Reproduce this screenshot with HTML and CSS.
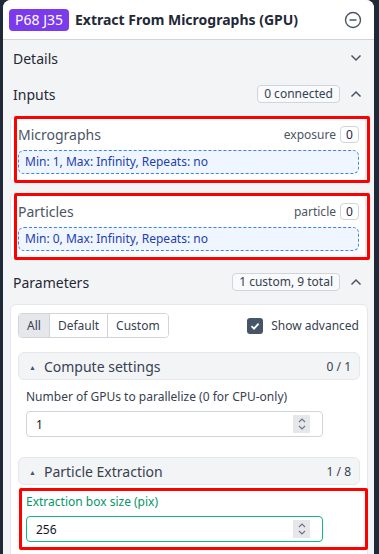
FILE: index.html
```html
<!doctype html>
<html lang="en">

<head>
  <meta charset="UTF-8" />
  <title>Extract From Micrographs (GPU)</title>
  <link rel="stylesheet" href="styles.css">
</head>

<body>
  <div class="panel">
    <div class="header">
      <span class="job-badge">P68 J35</span>
      <h1 class="title">Extract From Micrographs (GPU)</h1>
      <svg class="header-icon" width="18" height="18" viewBox="0 0 18 18">
        <circle cx="9" cy="9" r="7.5" fill="none" stroke="#4b5563" stroke-width="1.4" />
        <line x1="5.5" y1="9" x2="12.5" y2="9" stroke="#4b5563" stroke-width="1.4" />
      </svg>
    </div>

    <div class="section-row">
      <span class="section-title">Details</span>
      <div class="section-meta">
        <svg class="chevron" width="12" height="8" viewBox="0 0 12 8">
          <path d="M1.5 1.5 L6 6 L10.5 1.5" fill="none" stroke="#4b5563" stroke-width="1.5" />
        </svg>
      </div>
    </div>

    <div class="section-row">
      <span class="section-title">Inputs</span>
      <div class="section-meta">
        <span class="pill">0 connected</span>
        <svg class="chevron" width="12" height="8" viewBox="0 0 12 8">
          <path d="M1.5 6.5 L6 2 L10.5 6.5" fill="none" stroke="#4b5563" stroke-width="1.5" />
        </svg>
      </div>
    </div>

    <div class="inputs">
      <div class="input-card marked">
        <div class="input-head">
          <span class="input-name">Micrographs</span>
          <span class="input-type">exposure <span class="count">0</span></span>
        </div>
        <div class="input-rule">Min: 1, Max: Infinity, Repeats: no</div>
      </div>

      <div class="input-card marked">
        <div class="input-head">
          <span class="input-name">Particles</span>
          <span class="input-type">particle <span class="count">0</span></span>
        </div>
        <div class="input-rule">Min: 0, Max: Infinity, Repeats: no</div>
      </div>
    </div>

    <div class="section-row params-row">
      <span class="section-title">Parameters</span>
      <div class="section-meta">
        <span class="pill">1 custom, 9 total</span>
        <svg class="chevron" width="12" height="8" viewBox="0 0 12 8">
          <path d="M1.5 6.5 L6 2 L10.5 6.5" fill="none" stroke="#4b5563" stroke-width="1.5" />
        </svg>
      </div>
    </div>

    <div class="params-card">
      <div class="toolbar">
        <div class="segmented">
          <button class="seg active">All</button>
          <button class="seg">Default</button>
          <button class="seg">Custom</button>
        </div>
        <label class="advanced">
          <span class="checkbox">
            <svg width="12" height="12" viewBox="0 0 12 12">
              <path d="M2.5 6.2 L5 8.6 L9.6 3.6" fill="none" stroke="white" stroke-width="1.8" />
            </svg>
          </span>
          Show advanced
        </label>
      </div>

      <div class="group-head">
        <span class="group-name"><span class="caret">&#9650;</span>Compute settings</span>
        <span class="group-count">0 / 1</span>
      </div>
      <div class="field">
        <label class="field-label">Number of GPUs to parallelize (0 for CPU-only)</label>
        <div class="num-input">
          <span>1</span>
          <span class="spinner">
            <svg width="10" height="14" viewBox="0 0 10 14">
              <path d="M2 5 L5 2 L8 5 M2 9 L5 12 L8 9" fill="none" stroke="#6b7280" stroke-width="1.1" />
            </svg>
          </span>
        </div>
      </div>

      <div class="group-head">
        <span class="group-name"><span class="caret">&#9650;</span>Particle Extraction</span>
        <span class="group-count">1 / 8</span>
      </div>
      <div class="field custom marked-field">
        <label class="field-label">Extraction box size (pix)</label>
        <div class="num-input">
          <span>256</span>
          <span class="spinner">
            <svg width="10" height="14" viewBox="0 0 10 14">
              <path d="M2 5 L5 2 L8 5 M2 9 L5 12 L8 9" fill="none" stroke="#6b7280" stroke-width="1.1" />
            </svg>
          </span>
        </div>
      </div>
    </div>
  </div>
</body>

</html>
```

FILE: styles.css
```css
* {
  margin: 0;
  padding: 0;
  box-sizing: border-box;
}

html,
body {
  width: 100%;
  height: 100%;
}

body {
  background-color: #1f2937;
  font-family: 'Noto Sans', sans-serif;
  color: #1f2937;
  overflow: hidden;
}

.panel {
  width: 371px;
  height: 100%;
  margin-left: 3px;
  background-color: #f3f4f6;
  border-radius: 8px 8px 0 0;
  overflow: hidden;
}

.header {
  display: flex;
  align-items: center;
  height: 40px;
  padding: 0 12px 0 6px;
  background-color: white;
  border-bottom: 1px solid #d1d5db;
}

.job-badge {
  background-color: #7c3aed;
  color: white;
  font-size: 14px;
  line-height: 22px;
  padding: 0 6px;
  border-radius: 4px;
}

.title {
  font-size: 14px;
  font-weight: 700;
  color: #1f2937;
  margin-left: 6px;
  flex: 1;
}

.header-icon {
  display: block;
}

.section-row {
  display: flex;
  align-items: center;
  justify-content: space-between;
  height: 36px;
  padding: 0 10px;
}

.section-title {
  font-size: 14px;
  color: #1f2937;
}

.section-meta {
  display: flex;
  align-items: center;
  gap: 10px;
}

.chevron {
  display: block;
  margin-right: 2px;
}

.pill {
  font-size: 12px;
  line-height: 16px;
  color: #374151;
  border: 1px solid #d1d5db;
  border-radius: 4px;
  padding: 0 6px;
  background-color: #f9fafb;
}

.inputs {
  display: flex;
  flex-direction: column;
  gap: 10px;
  padding: 4px 8px 0 7px;
}

.input-card {
  position: relative;
  background-color: white;
  border: 1px solid #e5e7eb;
  border-radius: 6px;
  padding: 7px 6px 8px 7px;
}

.marked::after {
  content: "";
  position: absolute;
  top: -1px;
  left: 3px;
  right: -5px;
  bottom: -1px;
  border: 3px solid #ff0000;
  border-radius: 2px;
  pointer-events: none;
}

.input-head {
  display: flex;
  align-items: center;
  justify-content: space-between;
  height: 20px;
}

.input-name {
  font-size: 14px;
  color: #4b5563;
}

.input-type {
  font-size: 12px;
  color: #4b5563;
  display: flex;
  align-items: center;
  gap: 4px;
}

.count {
  display: inline-block;
  min-width: 19px;
  text-align: center;
  border: 1px solid #d1d5db;
  border-radius: 4px;
  line-height: 15px;
  color: #1f2937;
}

.input-rule {
  margin-top: 6px;
  font-size: 12px;
  line-height: 22px;
  color: #1e40af;
  background-color: #eff6ff;
  border: 1px dashed #3b82f6;
  border-radius: 6px;
  padding: 0 6px;
}

.params-row {
  margin-top: 4px;
}

.params-card {
  margin: 4px 6px 0 7px;
  background-color: white;
  border: 1px solid #e5e7eb;
  border-radius: 6px;
  padding: 8px 7px 10px 7px;
  height: 260px;
}

.toolbar {
  display: flex;
  align-items: center;
  justify-content: space-between;
}

.segmented {
  display: flex;
  border: 1px solid #d1d5db;
  border-radius: 4px;
  overflow: hidden;
}

.seg {
  font-family: 'Noto Sans', sans-serif;
  font-size: 12px;
  line-height: 23px;
  padding: 0 8px;
  background-color: white;
  color: #374151;
  border: none;
  border-left: 1px solid #d1d5db;
}

.seg:first-child {
  border-left: none;
}

.seg.active {
  background-color: #e5e7eb;
}

.advanced {
  display: flex;
  align-items: center;
  gap: 8px;
  font-size: 12px;
  color: #374151;
  margin-right: 1px;
}

.checkbox {
  display: flex;
  align-items: center;
  justify-content: center;
  width: 16px;
  height: 16px;
  border-radius: 3px;
  background-color: #475569;
}

.group-head {
  display: flex;
  align-items: center;
  justify-content: space-between;
  margin-top: 14px;
  height: 28px;
  padding: 0 8px 0 10px;
  background-color: #f3f4f6;
  border: 1px solid #e5e7eb;
  border-radius: 6px;
}

.group-name {
  font-size: 14px;
  color: #374151;
}

.caret {
  font-size: 7px;
  color: #4b5563;
  vertical-align: 2px;
  margin-right: 8px;
}

.group-count {
  font-size: 12px;
  color: #374151;
}

.field {
  position: relative;
  padding: 9px 8px 6px 8px;
}

.field-label {
  display: block;
  font-size: 12px;
  color: #374151;
  line-height: 16px;
}

.num-input {
  display: flex;
  align-items: center;
  justify-content: space-between;
  width: 297px;
  height: 26px;
  margin-top: 6px;
  padding: 0 12px 0 9px;
  border: 1px solid #d1d5db;
  border-radius: 4px;
  font-size: 12px;
  color: #111827;
}

.spinner {
  display: flex;
  align-items: center;
  justify-content: center;
  width: 17px;
  height: 18px;
  background-color: #e5e7eb;
}

.custom .field-label {
  color: #059669;
}

.custom .num-input {
  border-color: #10b981;
}

.marked-field::after {
  content: "";
  position: absolute;
  top: 3px;
  left: 1px;
  right: -8px;
  bottom: -2px;
  border: 3px solid #ff0000;
  border-radius: 2px;
  pointer-events: none;
}
```
